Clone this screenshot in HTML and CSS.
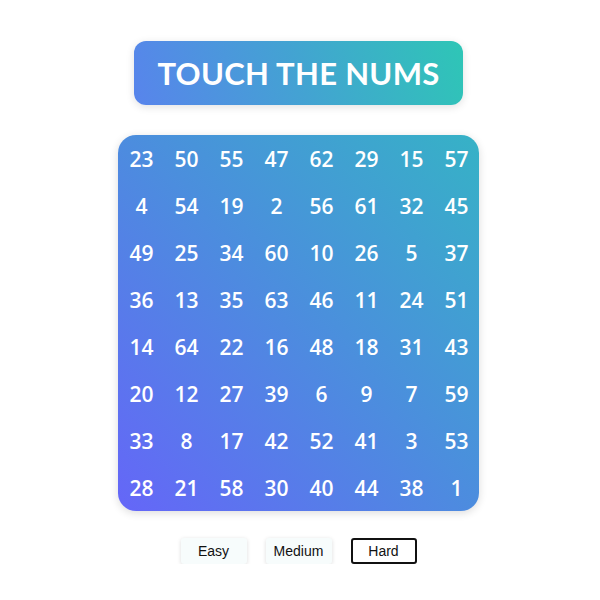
FILE: index.html
```html
<!DOCTYPE html>
<html>
<head>
<meta charset="utf-8">
<link rel="stylesheet" href="styles.css">
</head>
<body>
<div class="page">
  <h1 class="title">TOUCH THE NUMS</h1>
  <div class="board">
    <span>23</span><span>50</span><span>55</span><span>47</span><span>62</span><span>29</span><span>15</span><span>57</span>
    <span>4</span><span>54</span><span>19</span><span>2</span><span>56</span><span>61</span><span>32</span><span>45</span>
    <span>49</span><span>25</span><span>34</span><span>60</span><span>10</span><span>26</span><span>5</span><span>37</span>
    <span>36</span><span>13</span><span>35</span><span>63</span><span>46</span><span>11</span><span>24</span><span>51</span>
    <span>14</span><span>64</span><span>22</span><span>16</span><span>48</span><span>18</span><span>31</span><span>43</span>
    <span>20</span><span>12</span><span>27</span><span>39</span><span>6</span><span>9</span><span>7</span><span>59</span>
    <span>33</span><span>8</span><span>17</span><span>42</span><span>52</span><span>41</span><span>3</span><span>53</span>
    <span>28</span><span>21</span><span>58</span><span>30</span><span>40</span><span>44</span><span>38</span><span>1</span>
  </div>
  <div class="levels">
    <button class="level">Easy</button>
    <button class="level">Medium</button>
    <button class="level active">Hard</button>
  </div>
</div>
</body>
</html>
```
FILE: styles.css
```css
html, body {
  margin: 0;
  padding: 0;
  background: #ffffff;
}
.page {
  width: 597px;
  display: flex;
  flex-direction: column;
  align-items: center;
  padding-top: 41px;
  font-family: "Open Sans", "DejaVu Sans", sans-serif;
}
.title {
  margin: 0;
  width: 329px;
  height: 64px;
  box-sizing: border-box;
  display: flex;
  align-items: center;
  justify-content: center;
  border-radius: 12px;
  background: linear-gradient(70deg, #5884ec 0%, #43a3d2 50%, #2ec6b6 100%);
  box-shadow: 0 2px 8px rgba(0,0,0,0.12);
  color: #fff;
  font-family: "Lato", sans-serif;
  font-size: 31px;
  font-weight: 700;
  letter-spacing: 0.3px;
}
.board {
  margin-top: 30px;
  width: 361px;
  height: 376px;
  box-sizing: border-box;
  padding: 0 0 0 1px;
  border-radius: 18px;
  background: linear-gradient(to top right, #6566f8 0%, #4a90dc 55%, #36b2c6 100%);
  box-shadow: 0 2px 8px rgba(0,0,0,0.14);
  display: grid;
  grid-template-columns: repeat(8, 45px);
  grid-template-rows: repeat(8, 47px);
  align-content: center;
  justify-content: center;
}
.board span {
  display: flex;
  align-items: center;
  justify-content: center;
  color: #fff;
  font-size: 21px;
  font-weight: 600;
}
.levels {
  margin-top: 27px;
  display: flex;
  gap: 19px;
}
.level {
  width: 66px;
  height: 26px;
  box-sizing: border-box;
  border: 2px solid transparent;
  border-radius: 3px;
  background: #f7fcfc;
  box-shadow: 0 1px 4px rgba(0,0,0,0.14);
  font-family: "Liberation Sans", Arial, sans-serif;
  font-size: 14px;
  color: #111;
  padding: 0;
}
.level.active {
  border-color: #111;
  background: #fff;
  box-shadow: none;
}
```
